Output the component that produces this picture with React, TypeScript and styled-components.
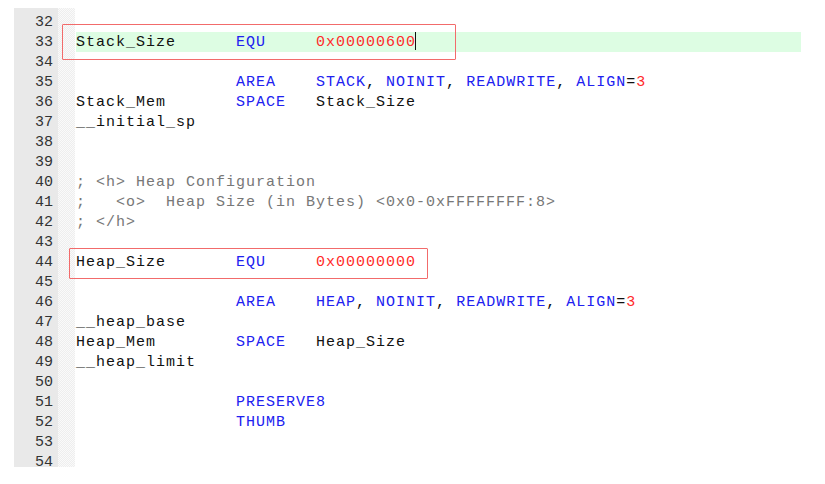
import React from "react";
import styled, { createGlobalStyle } from "styled-components";

const Global = createGlobalStyle`
  html, body { margin: 0; padding: 0; background: #ffffff; }
  body { width: 825px; height: 484px; overflow: hidden; }
`;

const Page = styled.div`
  padding: 8px 0 0 14px;
`;

const Editor = styled.div`
  position: relative;
  width: 787px;
  height: 459px;
  overflow: hidden;
  background: #ffffff;
  display: flex;
  font-family: "Liberation Mono", "DejaVu Sans Mono", monospace;
  font-size: 15px;
`;

const Gutter = styled.div`
  width: 44px;
  background: #e9e9e9;
  padding-top: 5px;
  flex-shrink: 0;
`;

const LineNo = styled.div`
  height: 20px;
  line-height: 20px;
  text-align: right;
  padding-right: 5px;
  color: #333333;
`;

const Strip = styled.div`
  width: 17px;
  flex-shrink: 0;
  background-color: #f6f6f6;
  background-image: repeating-conic-gradient(#eeeeee 0% 25%, #fafafa 0% 50%);
  background-size: 2px 2px;
`;

const Code = styled.div`
  flex: 1;
  padding-top: 4px;
  padding-left: 1px;
`;

const Line = styled.div<{ $active?: boolean }>`
  height: 20px;
  line-height: 22px;
  white-space: pre;
  letter-spacing: 1px;
  color: #111111;
  background: ${(p) => (p.$active ? "#ddfde3" : "transparent")};
`;

const Kw = styled.span`
  color: #2020f0;
`;

const Num = styled.span`
  color: #ff2a2a;
`;

const Comment = styled.span`
  color: #777777;
`;

const Caret = styled.span`
  display: inline-block;
  width: 0;
  height: 18px;
  vertical-align: -4px;
  border-left: 1.5px solid #111;
  margin-left: -1px;
`;

const Mark = styled.div<{ $left: number; $top: number; $w: number; $h: number }>`
  position: absolute;
  left: ${(p) => p.$left}px;
  top: ${(p) => p.$top}px;
  width: ${(p) => p.$w}px;
  height: ${(p) => p.$h}px;
  box-sizing: border-box;
  border: 1.5px solid #f26b6b;
  border-radius: 1px;
  pointer-events: none;
`;

type L = { n: number; content: React.ReactNode; active?: boolean };

const lines: L[] = [
  { n: 32, content: "" },
  {
    n: 33,
    active: true,
    content: (
      <>
        {"Stack_Size      "}
        <Kw>EQU</Kw>
        {"     "}
        <Num>0x00000600</Num>
        <Caret />
      </>
    ),
  },
  { n: 34, content: "" },
  {
    n: 35,
    content: (
      <>
        {"                "}
        <Kw>AREA</Kw>
        {"    "}
        <Kw>STACK</Kw>, <Kw>NOINIT</Kw>, <Kw>READWRITE</Kw>, <Kw>ALIGN</Kw>=<Num>3</Num>
      </>
    ),
  },
  {
    n: 36,
    content: (
      <>
        {"Stack_Mem       "}
        <Kw>SPACE</Kw>
        {"   Stack_Size"}
      </>
    ),
  },
  { n: 37, content: "__initial_sp" },
  { n: 38, content: "" },
  { n: 39, content: "" },
  { n: 40, content: <Comment>{"; <h> Heap Configuration"}</Comment> },
  { n: 41, content: <Comment>{";   <o>  Heap Size (in Bytes) <0x0-0xFFFFFFFF:8>"}</Comment> },
  { n: 42, content: <Comment>{"; </h>"}</Comment> },
  { n: 43, content: "" },
  {
    n: 44,
    content: (
      <>
        {"Heap_Size       "}
        <Kw>EQU</Kw>
        {"     "}
        <Num>0x00000000</Num>
      </>
    ),
  },
  { n: 45, content: "" },
  {
    n: 46,
    content: (
      <>
        {"                "}
        <Kw>AREA</Kw>
        {"    "}
        <Kw>HEAP</Kw>, <Kw>NOINIT</Kw>, <Kw>READWRITE</Kw>, <Kw>ALIGN</Kw>=<Num>3</Num>
      </>
    ),
  },
  { n: 47, content: "__heap_base" },
  {
    n: 48,
    content: (
      <>
        {"Heap_Mem        "}
        <Kw>SPACE</Kw>
        {"   Heap_Size"}
      </>
    ),
  },
  { n: 49, content: "__heap_limit" },
  { n: 50, content: "" },
  {
    n: 51,
    content: (
      <>
        {"                "}
        <Kw>PRESERVE8</Kw>
      </>
    ),
  },
  {
    n: 52,
    content: (
      <>
        {"                "}
        <Kw>THUMB</Kw>
      </>
    ),
  },
  { n: 53, content: "" },
  { n: 54, content: "" },
];

export default function App() {
  return (
    <>
      <Global />
      <Page>
        <Editor>
          <Gutter>
            {lines.map((l) => (
              <LineNo key={l.n}>{l.n}</LineNo>
            ))}
          </Gutter>
          <Strip />
          <Code>
            {lines.map((l) => (
              <Line key={l.n} $active={l.active}>
                {l.content === "" ? " " : l.content}
              </Line>
            ))}
          </Code>
          <Mark $left={48} $top={16} $w={394} $h={36} />
          <Mark $left={55} $top={240} $w={359} $h={31} />
        </Editor>
      </Page>
    </>
  );
}
